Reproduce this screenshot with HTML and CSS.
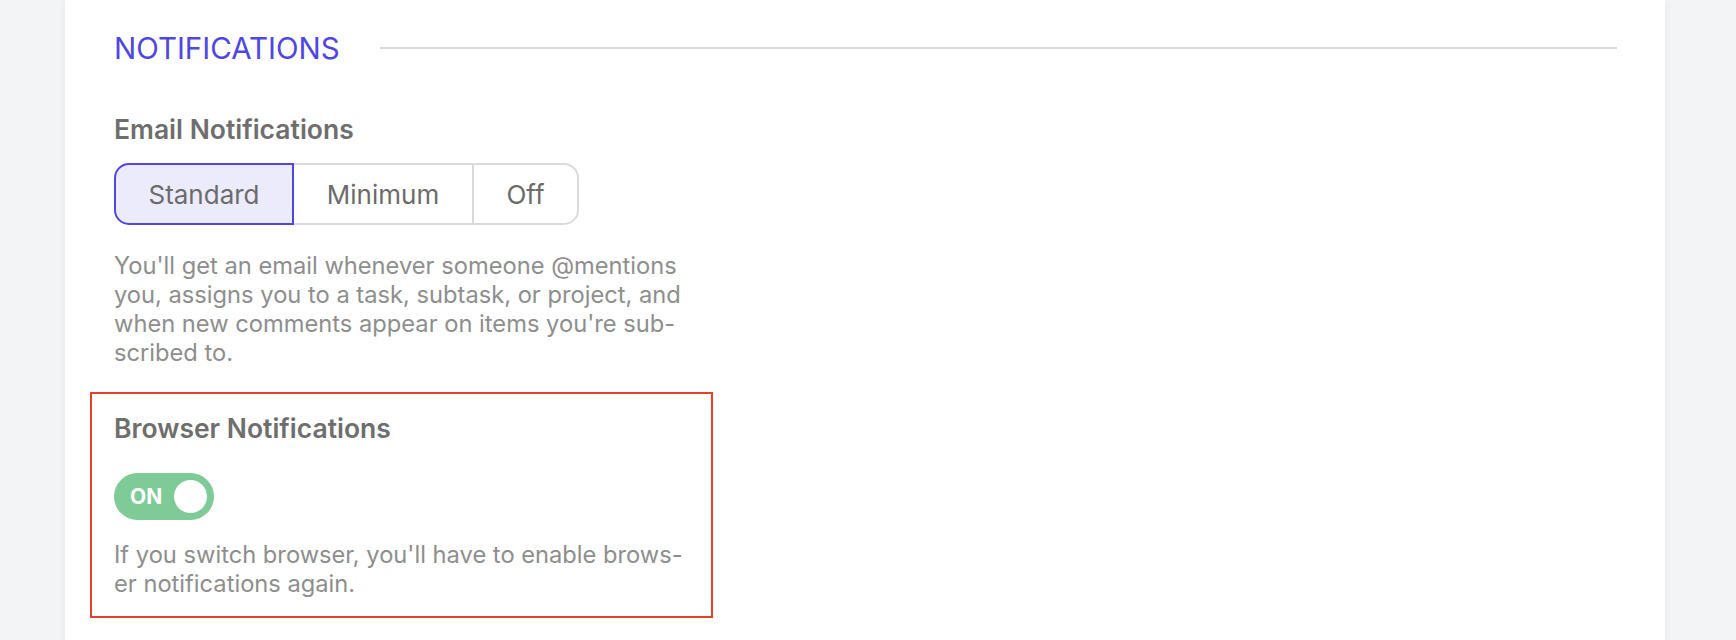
FILE: index.html
```html
<!DOCTYPE html>
<html lang="en">
<head>
<meta charset="utf-8">
<title>Notifications settings</title>
<link rel="stylesheet" href="styles.css">
</head>
<body>
<div class="page">
  <div class="card">
    <div class="section-head">
      <h2 class="section-title">NOTIFICATIONS</h2>
      <div class="section-rule"></div>
    </div>

    <div class="field">
      <div class="field-label">Email Notifications</div>
      <div class="segmented">
        <button class="seg seg-active">Standard</button>
        <button class="seg seg-mid">Minimum</button>
        <button class="seg seg-last">Off</button>
      </div>
      <p class="field-help">You'll get an email whenever someone @mentions<br>you, assigns you to a task, subtask, or project, and<br>when new comments appear on items you're sub-<br>scribed to.</p>
    </div>

    <div class="field field-highlight">
      <div class="field-label">Browser Notifications</div>
      <div class="toggle toggle-on">
        <span class="toggle-text">ON</span>
        <span class="toggle-knob"></span>
      </div>
      <p class="field-help">If you switch browser, you'll have to enable brows-<br>er notifications again.</p>
    </div>
  </div>
</div>
</body>
</html>
```

FILE: styles.css
```css
html, body {
  margin: 0;
  padding: 0;
  background: #f3f4f6;
  font-family: "Inter", "Liberation Sans", sans-serif;
}

.page {
  padding: 0 71px 0 65px;
  height: 640px;
  overflow: hidden;
}

.card {
  background: #ffffff;
  box-shadow: 0 0 8px rgba(0, 0, 0, 0.06);
  padding: 30px 48px 40px 49px;
  min-height: 700px;
}

.section-head {
  display: flex;
  align-items: center;
  gap: 40px;
}

.section-title {
  margin: 0;
  font-size: 29.5px;
  line-height: 36px;
  font-weight: 400;
  color: #4f46e5;
  letter-spacing: 0;
}

.section-rule {
  flex: 1;
  height: 2px;
  background: #d9d9d9;
}

.field {
  margin-top: 48px;
}

.field-label {
  font-size: 26.5px;
  line-height: 30px;
  font-weight: 600;
  color: #6e6e6e;
}

.segmented {
  display: inline-flex;
  margin-top: 19px;
  height: 62px;
}

.seg {
  font-family: inherit;
  font-size: 26px;
  color: #6b6b6b;
  background: #ffffff;
  border: 2px solid #dadada;
  border-left: none;
  padding: 0;
  height: 62px;
  width: 180px;
  cursor: pointer;
}

.seg-active {
  background: #ecebfc;
  border: 2px solid #4f46e5;
  border-radius: 15px 0 0 15px;
}

.seg-last {
  width: 105px;
  border-radius: 0 15px 15px 0;
}

.field-help {
  margin: 26px 0 0;
  font-size: 23.7px;
  line-height: 29px;
  color: #8e8e8e;
}

.field-highlight {
  margin: 25px 0 0 -24px;
  width: 623px;
  box-sizing: border-box;
  border: 2px solid #e5402b;
  padding: 19px 22px 18px 22px;
}

.toggle {
  margin-top: 30px;
  width: 100px;
  height: 47px;
  border-radius: 24px;
  background: #7fcb98;
  display: flex;
  align-items: center;
  justify-content: space-between;
  padding: 0 7px 0 16px;
  box-sizing: border-box;
}

.toggle-text {
  color: #ffffff;
  font-weight: 700;
  font-size: 21px;
}

.toggle-knob {
  width: 33px;
  height: 33px;
  border-radius: 50%;
  background: #ffffff;
}

.field-highlight .field-help {
  margin-top: 20px;
}
```
